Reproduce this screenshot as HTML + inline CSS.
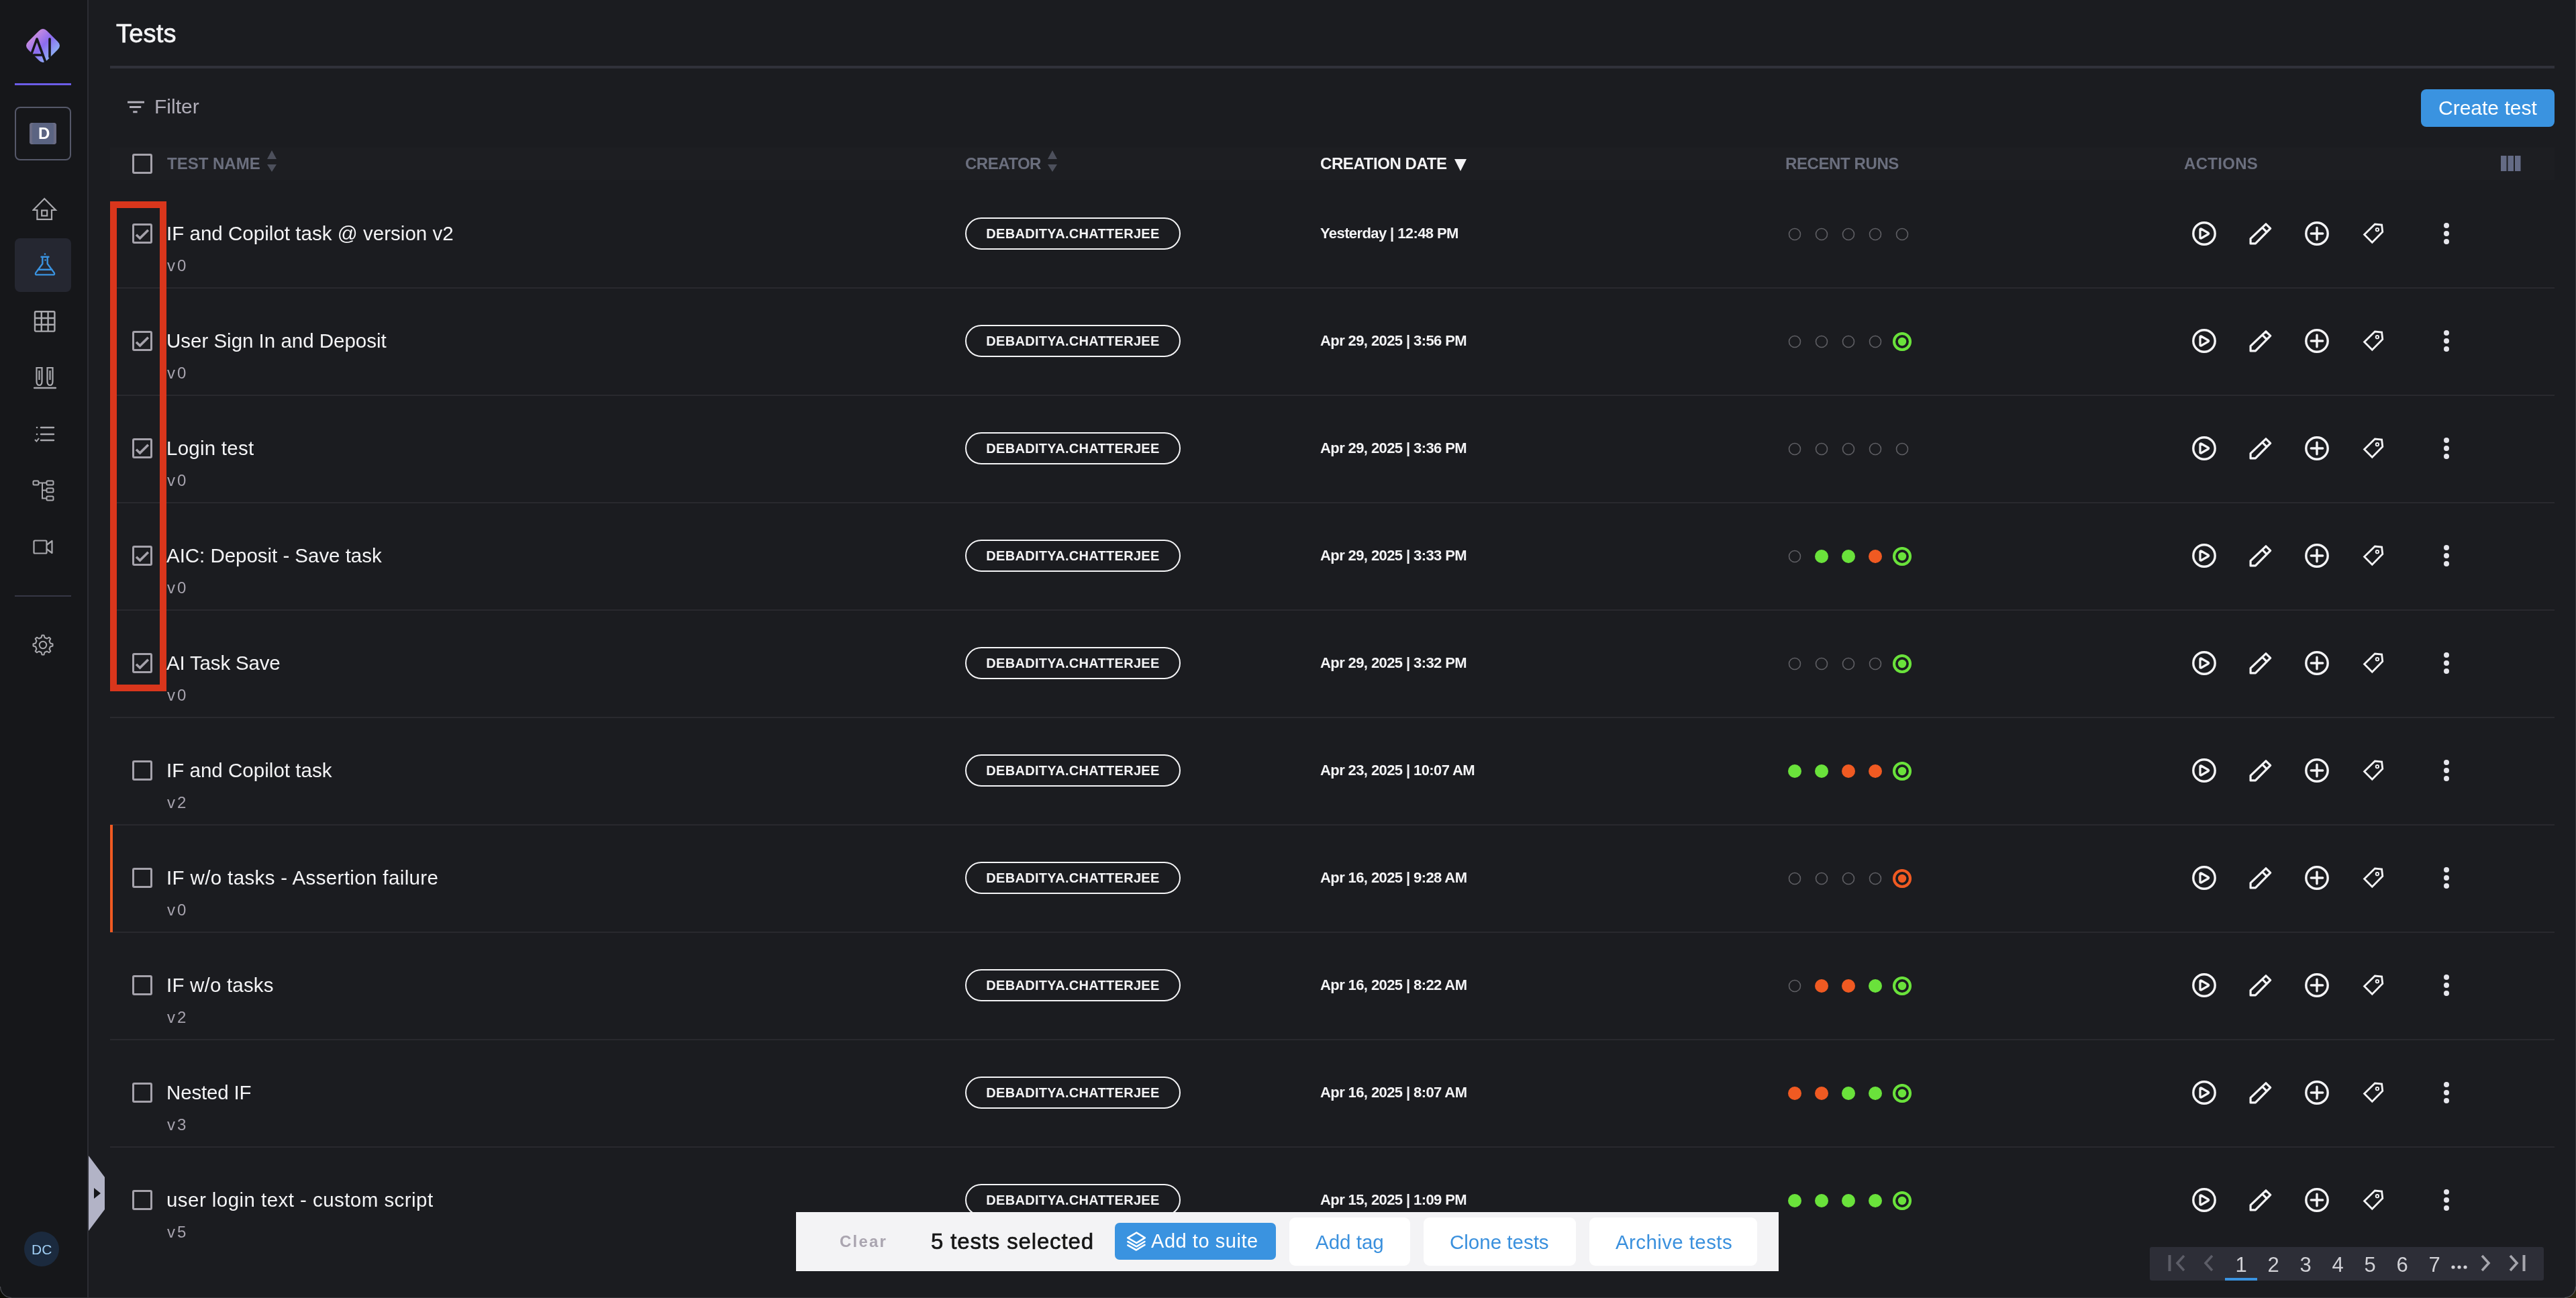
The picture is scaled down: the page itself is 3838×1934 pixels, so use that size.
<!DOCTYPE html>
<html><head><meta charset="utf-8"><style>
html,body{margin:0;padding:0;}
body{width:3838px;height:1934px;overflow:hidden;position:relative;background:#1b1c20;font-family:"Liberation Sans", sans-serif;}
.t{position:absolute;white-space:pre;line-height:1;will-change:transform;}
.badge{position:absolute;will-change:transform;width:321px;height:48px;box-sizing:border-box;border:2px solid #f4f4f6;border-radius:24px;color:#f4f4f6;font-weight:700;font-size:20px;letter-spacing:0.3px;text-align:center;line-height:44px;}
</style></head><body>
<div style="position:absolute;left:0px;top:0px;width:130px;height:1934px;background:#16171a"></div>
<div style="position:absolute;left:130px;top:0px;width:2px;height:1934px;background:#2c2d33"></div>
<svg style="position:absolute;left:36px;top:40px" width="56" height="56" viewBox="0 0 56 56">
<defs><linearGradient id="lg" x1="0" y1="0" x2="1" y2="1">
<stop offset="0.05" stop-color="#e79cd8"/><stop offset="0.5" stop-color="#8b6cf0"/><stop offset="0.95" stop-color="#90d2f7"/></linearGradient></defs>
<path d="M22 6 Q28 0 34 6 L50 22 Q56 28 50 34 L34 50 Q28 56 22 50 L6 34 Q0 28 6 22 Z" fill="url(#lg)"/>
<path d="M11 40 L19 18 L32 53 M14 42 L28 42 M38 18 L38 45" stroke="#16171a" stroke-width="3.6" fill="none" stroke-linecap="round" stroke-linejoin="round"/>
</svg>
<div style="position:absolute;left:22px;top:124px;width:84px;height:3px;background:#6b5ce7"></div>
<div style="position:absolute;left:22px;top:159px;width:84px;height:80px;border:2px solid #555869;border-radius:8px;box-sizing:border-box"></div>
<div style="position:absolute;left:44px;top:183px;width:40px;height:32px;background:#5b6482;border-radius:4px;box-shadow:inset 4px 0 0 #6a6c84, inset -4px 0 0 #6a6c84"></div>
<div class="t" style="left:57px;top:186.68px;font-size:24px;color:#fff;font-weight:700;letter-spacing:0px;">D</div>
<div style="position:absolute;left:22px;top:355px;width:84px;height:80px;background:#252731;border-radius:8px"></div>
<svg style="position:absolute;left:48px;top:293px" width="38" height="36" viewBox="0 0 38 36"><path d="M1.5 20 L18.2 3 L34.9 20 L29 20 L29 33.8 L7.4 33.8 L7.4 20 Z" stroke="#a9a9ae" stroke-width="2.2" fill="none" stroke-linejoin="miter"/><rect x="14.2" y="20.5" width="8" height="8" stroke="#a9a9ae" stroke-width="2.2" fill="none"/></svg>
<svg style="position:absolute;left:49px;top:376px" width="36" height="38" viewBox="0 0 36 38"><path d="M12.5 6.8 L23.5 6.8 M14.3 6.8 L14.3 17 L4.2 30.6 Q3 33.4 6.2 33.4 L29.8 33.4 Q33 33.4 31.8 30.6 L21.7 17 L21.7 6.8 M7.5 25.8 L28.5 25.8" stroke="#3a93e0" stroke-width="2.4" fill="none" stroke-linejoin="round" stroke-linecap="round"/><circle cx="18" cy="2.6" r="1.3" fill="#3a93e0"/><circle cx="18.5" cy="11.5" r="1.2" fill="#3a93e0"/></svg>
<svg style="position:absolute;left:50px;top:462px" width="34" height="34" viewBox="0 0 34 34"><rect x="2" y="2.2" width="29.4" height="29.4" rx="1.5" stroke="#a9a9ae" stroke-width="2.4" fill="none"/><path d="M11.8 2 V31.6 M21.6 2 V31.6 M2 12 H31.4 M2 21.8 H31.4" stroke="#a9a9ae" stroke-width="2.4"/></svg>
<svg style="position:absolute;left:50px;top:546px" width="34" height="35" viewBox="0 0 34 35"><path d="M4.5 2 V22 Q4.5 28 8.5 28 Q12.5 28 12.5 22 V2 Z M20.5 2 V22 Q20.5 28 24.5 28 Q28.5 28 28.5 22 V2 Z M8.5 6 V20 M24.5 6 V20" stroke="#a9a9ae" stroke-width="2.2" fill="none"/><path d="M1 32 H33" stroke="#a9a9ae" stroke-width="2.4" stroke-linecap="round"/></svg>
<svg style="position:absolute;left:50px;top:634px" width="32" height="26" viewBox="0 0 32 26"><path d="M11 3 H30 M11 13 H30 M11 22 H30" stroke="#a9a9ae" stroke-width="2.4" stroke-linecap="round"/><circle cx="5" cy="3" r="1.3" fill="#a9a9ae"/><circle cx="5" cy="13" r="1.3" fill="#a9a9ae"/><path d="M2 21 L4.5 23.5 L8 19" stroke="#a9a9ae" stroke-width="2" fill="none"/></svg>
<svg style="position:absolute;left:48px;top:715px" width="33" height="33" viewBox="0 0 33 33"><rect x="1.5" y="1.5" width="8" height="6" rx="1.5" stroke="#a9a9ae" stroke-width="2" fill="none"/><rect x="21.5" y="1.5" width="10" height="6" rx="1.5" stroke="#a9a9ae" stroke-width="2" fill="none"/><rect x="21.5" y="12.5" width="10" height="6" rx="1.5" stroke="#a9a9ae" stroke-width="2" fill="none"/><rect x="21.5" y="24.5" width="10" height="6" rx="1.5" stroke="#a9a9ae" stroke-width="2" fill="none"/><path d="M9.5 4.5 H21.5 M15 4.5 V27.5 H21.5 M15 15.5 H21.5" stroke="#a9a9ae" stroke-width="2" fill="none"/></svg>
<svg style="position:absolute;left:49px;top:804px" width="31" height="23" viewBox="0 0 31 23"><rect x="1.5" y="1.5" width="19" height="19" rx="1.5" stroke="#a9a9ae" stroke-width="2.2" fill="none"/><path d="M20.5 8 L28.5 2 V20 L20.5 14" stroke="#a9a9ae" stroke-width="2.2" fill="none" stroke-linejoin="round"/></svg>
<div style="position:absolute;left:22px;top:887px;width:84px;height:2px;background:#363745"></div>
<svg style="position:absolute;left:48px;top:945px" width="32" height="32" viewBox="0 0 32 32"><g transform="translate(0.5,0)"><path d="M14 1.5 L17 1.5 L18 5 L21.5 6.5 L24.7 4.7 L26.8 6.8 L25 10 L26.5 13.5 L30 14.5 V17.5 L26.5 18.5 L25 22 L26.8 25.2 L24.7 27.3 L21.5 25.5 L18 27 L17 30.5 H14 L13 27 L9.5 25.5 L6.3 27.3 L4.2 25.2 L6 22 L4.5 18.5 L1 17.5 V14.5 L4.5 13.5 L6 10 L4.2 6.8 L6.3 4.7 L9.5 6.5 L13 5 Z" stroke="#a9a9ae" stroke-width="2" fill="none" stroke-linejoin="round"/><circle cx="15.5" cy="16" r="5.2" stroke="#a9a9ae" stroke-width="2" fill="none"/></g></svg>
<div style="position:absolute;left:36px;top:1835px;width:52px;height:52px;background:#1b2a3e;border-radius:50%"></div>
<div class="t" style="left:47px;top:1851.22px;font-size:21px;color:#9fcdf2;font-weight:400;letter-spacing:0px;">DC</div>
<svg style="position:absolute;left:132px;top:1722px" width="24" height="112" viewBox="0 0 24 112"><path d="M0 0 L24 32 L24 80 L0 112 Z" fill="#b2b3c6"/><path d="M8 48 L18 56 L8 64 Z" fill="#16171a"/></svg>
<div class="t" style="left:173px;top:31.23px;font-size:38px;color:#f4f4f6;font-weight:400;letter-spacing:0.2px;-webkit-text-stroke:0.75px #f4f4f6">Tests</div>
<div style="position:absolute;left:164px;top:98px;width:3642px;height:4px;background:#30313a"></div>
<svg style="position:absolute;left:189px;top:149px" width="28" height="21" viewBox="0 0 28 21"><path d="M1 3.3 H26 M4 10.5 H21.2 M9.2 17.7 H15.6" stroke="#b0adb8" stroke-width="3"/></svg>
<div class="t" style="left:230px;top:143.60px;font-size:30px;color:#b0adb8;font-weight:400;letter-spacing:0px;">Filter</div>
<div style="position:absolute;left:3607px;top:133px;width:199px;height:56px;background:#3a93e0;border-radius:8px"></div>
<div class="t" style="left:3633px;top:145.60px;font-size:30px;color:#ffffff;font-weight:400;letter-spacing:0px;">Create test</div>
<div style="position:absolute;left:164px;top:220px;width:3642px;height:48px;background:#1d1e22"></div>
<div style="position:absolute;left:197px;top:229px;width:30px;height:30px;border:3px solid #a5a2ab;border-radius:3px;box-sizing:border-box"></div>
<div class="t" style="left:249px;top:231.68px;font-size:24px;color:#6b6f7e;font-weight:700;letter-spacing:0px;">TEST NAME</div>
<svg style="position:absolute;left:398px;top:224px" width="14" height="33" viewBox="0 0 14 33"><path d="M7 0 L14 13 L0 13 Z M0 21 L14 21 L7 32 Z" fill="#4d505c"/></svg>
<div class="t" style="left:1438px;top:231.68px;font-size:24px;color:#6b6f7e;font-weight:700;letter-spacing:-0.5px;">CREATOR</div>
<svg style="position:absolute;left:1561px;top:224px" width="14" height="33" viewBox="0 0 14 33"><path d="M7 0 L14 13 L0 13 Z M0 21 L14 21 L7 32 Z" fill="#4d505c"/></svg>
<div class="t" style="left:1967px;top:231.68px;font-size:24px;color:#f4f4f6;font-weight:700;letter-spacing:-0.4px;">CREATION DATE</div>
<svg style="position:absolute;left:2167px;top:237px" width="18" height="18" viewBox="0 0 18 18"><path d="M0 0 H18 L9 18 Z" fill="#f4f4f6"/></svg>
<div class="t" style="left:2660px;top:231.68px;font-size:24px;color:#6b6f7e;font-weight:700;letter-spacing:-0.4px;">RECENT RUNS</div>
<div class="t" style="left:3254px;top:231.68px;font-size:24px;color:#6b6f7e;font-weight:700;letter-spacing:0.3px;">ACTIONS</div>
<svg style="position:absolute;left:3726px;top:232px" width="30" height="23" viewBox="0 0 30 23"><rect x="0" y="0" width="8.5" height="23" fill="#646b85"/><rect x="10.5" y="0" width="8.5" height="23" fill="#646b85"/><rect x="21" y="0" width="8.5" height="23" fill="#646b85"/></svg>
<div style="position:absolute;left:164px;top:428px;width:3642px;height:2px;background:#29292e"></div>
<div style="position:absolute;left:197px;top:333px;width:30px;height:30px;border:3px solid #a5a2ab;border-radius:3px;box-sizing:border-box"></div>
<svg style="position:absolute;left:197px;top:333px" width="30" height="30" viewBox="0 0 30 30"><path d="M6 16.8 L11.5 22 L23.8 9.8" stroke="#a5a2ab" stroke-width="3.6" fill="none"/></svg>
<div class="t" style="left:248px;top:333.03px;font-size:29.5px;color:#f4f4f6;font-weight:400;letter-spacing:0.03px;">IF and Copilot task @ version v2</div>
<div class="t" style="left:249px;top:383.68px;font-size:24px;color:#a7a3ae;font-weight:400;letter-spacing:3px;">v0</div>
<div class="badge" style="left:1438px;top:324px">DEBADITYA.CHATTERJEE</div>
<div class="t" style="left:1967px;top:337.38px;font-size:22px;color:#f4f4f6;font-weight:700;letter-spacing:-0.6px;">Yesterday | 12:48 PM</div>
<svg style="position:absolute;left:2664px;top:339px" width="20" height="20" viewBox="0 0 20 20"><circle cx="10" cy="10" r="8.5" stroke="#5f5f64" stroke-width="1.6" fill="none"/></svg>
<svg style="position:absolute;left:2704px;top:339px" width="20" height="20" viewBox="0 0 20 20"><circle cx="10" cy="10" r="8.5" stroke="#5f5f64" stroke-width="1.6" fill="none"/></svg>
<svg style="position:absolute;left:2744px;top:339px" width="20" height="20" viewBox="0 0 20 20"><circle cx="10" cy="10" r="8.5" stroke="#5f5f64" stroke-width="1.6" fill="none"/></svg>
<svg style="position:absolute;left:2784px;top:339px" width="20" height="20" viewBox="0 0 20 20"><circle cx="10" cy="10" r="8.5" stroke="#5f5f64" stroke-width="1.6" fill="none"/></svg>
<svg style="position:absolute;left:2824px;top:339px" width="20" height="20" viewBox="0 0 20 20"><circle cx="10" cy="10" r="8.5" stroke="#5f5f64" stroke-width="1.6" fill="none"/></svg>
<svg style="position:absolute;left:3264px;top:328px" width="40" height="40" viewBox="0 0 40 40"><circle cx="20" cy="20" r="16.2" stroke="#f4f4f6" stroke-width="3.4" fill="none"/><path d="M15.5 13 Q14 12.5 14 14 V26 Q14 27.5 15.5 27 L26 21 Q27.5 20 26 19 Z" stroke="#f4f4f6" stroke-width="3.2" fill="none" stroke-linejoin="round"/></svg>
<svg style="position:absolute;left:3349px;top:329px" width="38" height="38" viewBox="0 0 38 38"><path d="M4.1 26.6 L27 4.8 L33.7 11.3 L11.4 33.9 L4.1 33.9 Z M21.2 9.6 L28.6 17.1" stroke="#f4f4f6" stroke-width="3.2" fill="none" stroke-linejoin="round"/></svg>
<svg style="position:absolute;left:3432px;top:328px" width="40" height="40" viewBox="0 0 40 40"><circle cx="20" cy="20" r="16.2" stroke="#f4f4f6" stroke-width="3.4" fill="none"/><path d="M11.3 20 H28.7 M20 11.3 V28.7" stroke="#f4f4f6" stroke-width="3.4" stroke-linecap="round"/></svg>
<svg style="position:absolute;left:3520px;top:332px" width="34" height="34" viewBox="0 0 34 34"><path d="M2.6 17.6 L18.4 2 L28.6 3 L29.8 13.6 L14.3 29.2 Z" stroke="#f4f4f6" stroke-width="2.8" fill="none" stroke-linejoin="miter"/><circle cx="21.9" cy="10.2" r="2.2" stroke="#f4f4f6" stroke-width="1.9" fill="none"/></svg>
<svg style="position:absolute;left:3640px;top:331px" width="10" height="34" viewBox="0 0 10 34"><circle cx="5" cy="5" r="4" fill="#e6e6ec"/><circle cx="5" cy="17" r="4" fill="#e6e6ec"/><circle cx="5" cy="29" r="4" fill="#e6e6ec"/></svg>
<div style="position:absolute;left:164px;top:588px;width:3642px;height:2px;background:#29292e"></div>
<div style="position:absolute;left:197px;top:493px;width:30px;height:30px;border:3px solid #a5a2ab;border-radius:3px;box-sizing:border-box"></div>
<svg style="position:absolute;left:197px;top:493px" width="30" height="30" viewBox="0 0 30 30"><path d="M6 16.8 L11.5 22 L23.8 9.8" stroke="#a5a2ab" stroke-width="3.6" fill="none"/></svg>
<div class="t" style="left:248px;top:493.03px;font-size:29.5px;color:#f4f4f6;font-weight:400;letter-spacing:-0.01px;">User Sign In and Deposit</div>
<div class="t" style="left:249px;top:543.68px;font-size:24px;color:#a7a3ae;font-weight:400;letter-spacing:3px;">v0</div>
<div class="badge" style="left:1438px;top:484px">DEBADITYA.CHATTERJEE</div>
<div class="t" style="left:1967px;top:497.38px;font-size:22px;color:#f4f4f6;font-weight:700;letter-spacing:-0.6px;">Apr 29, 2025 | 3:56 PM</div>
<svg style="position:absolute;left:2664px;top:499px" width="20" height="20" viewBox="0 0 20 20"><circle cx="10" cy="10" r="8.5" stroke="#5f5f64" stroke-width="1.6" fill="none"/></svg>
<svg style="position:absolute;left:2704px;top:499px" width="20" height="20" viewBox="0 0 20 20"><circle cx="10" cy="10" r="8.5" stroke="#5f5f64" stroke-width="1.6" fill="none"/></svg>
<svg style="position:absolute;left:2744px;top:499px" width="20" height="20" viewBox="0 0 20 20"><circle cx="10" cy="10" r="8.5" stroke="#5f5f64" stroke-width="1.6" fill="none"/></svg>
<svg style="position:absolute;left:2784px;top:499px" width="20" height="20" viewBox="0 0 20 20"><circle cx="10" cy="10" r="8.5" stroke="#5f5f64" stroke-width="1.6" fill="none"/></svg>
<svg style="position:absolute;left:2820px;top:495px" width="28" height="28" viewBox="0 0 28 28"><circle cx="14" cy="14" r="12" stroke="#6ae23b" stroke-width="4.1" fill="none"/><circle cx="14" cy="14" r="6.2" fill="#6ae23b"/></svg>
<svg style="position:absolute;left:3264px;top:488px" width="40" height="40" viewBox="0 0 40 40"><circle cx="20" cy="20" r="16.2" stroke="#f4f4f6" stroke-width="3.4" fill="none"/><path d="M15.5 13 Q14 12.5 14 14 V26 Q14 27.5 15.5 27 L26 21 Q27.5 20 26 19 Z" stroke="#f4f4f6" stroke-width="3.2" fill="none" stroke-linejoin="round"/></svg>
<svg style="position:absolute;left:3349px;top:489px" width="38" height="38" viewBox="0 0 38 38"><path d="M4.1 26.6 L27 4.8 L33.7 11.3 L11.4 33.9 L4.1 33.9 Z M21.2 9.6 L28.6 17.1" stroke="#f4f4f6" stroke-width="3.2" fill="none" stroke-linejoin="round"/></svg>
<svg style="position:absolute;left:3432px;top:488px" width="40" height="40" viewBox="0 0 40 40"><circle cx="20" cy="20" r="16.2" stroke="#f4f4f6" stroke-width="3.4" fill="none"/><path d="M11.3 20 H28.7 M20 11.3 V28.7" stroke="#f4f4f6" stroke-width="3.4" stroke-linecap="round"/></svg>
<svg style="position:absolute;left:3520px;top:492px" width="34" height="34" viewBox="0 0 34 34"><path d="M2.6 17.6 L18.4 2 L28.6 3 L29.8 13.6 L14.3 29.2 Z" stroke="#f4f4f6" stroke-width="2.8" fill="none" stroke-linejoin="miter"/><circle cx="21.9" cy="10.2" r="2.2" stroke="#f4f4f6" stroke-width="1.9" fill="none"/></svg>
<svg style="position:absolute;left:3640px;top:491px" width="10" height="34" viewBox="0 0 10 34"><circle cx="5" cy="5" r="4" fill="#e6e6ec"/><circle cx="5" cy="17" r="4" fill="#e6e6ec"/><circle cx="5" cy="29" r="4" fill="#e6e6ec"/></svg>
<div style="position:absolute;left:164px;top:748px;width:3642px;height:2px;background:#29292e"></div>
<div style="position:absolute;left:197px;top:653px;width:30px;height:30px;border:3px solid #a5a2ab;border-radius:3px;box-sizing:border-box"></div>
<svg style="position:absolute;left:197px;top:653px" width="30" height="30" viewBox="0 0 30 30"><path d="M6 16.8 L11.5 22 L23.8 9.8" stroke="#a5a2ab" stroke-width="3.6" fill="none"/></svg>
<div class="t" style="left:248px;top:653.03px;font-size:29.5px;color:#f4f4f6;font-weight:400;letter-spacing:0.24px;">Login test</div>
<div class="t" style="left:249px;top:703.68px;font-size:24px;color:#a7a3ae;font-weight:400;letter-spacing:3px;">v0</div>
<div class="badge" style="left:1438px;top:644px">DEBADITYA.CHATTERJEE</div>
<div class="t" style="left:1967px;top:657.38px;font-size:22px;color:#f4f4f6;font-weight:700;letter-spacing:-0.6px;">Apr 29, 2025 | 3:36 PM</div>
<svg style="position:absolute;left:2664px;top:659px" width="20" height="20" viewBox="0 0 20 20"><circle cx="10" cy="10" r="8.5" stroke="#5f5f64" stroke-width="1.6" fill="none"/></svg>
<svg style="position:absolute;left:2704px;top:659px" width="20" height="20" viewBox="0 0 20 20"><circle cx="10" cy="10" r="8.5" stroke="#5f5f64" stroke-width="1.6" fill="none"/></svg>
<svg style="position:absolute;left:2744px;top:659px" width="20" height="20" viewBox="0 0 20 20"><circle cx="10" cy="10" r="8.5" stroke="#5f5f64" stroke-width="1.6" fill="none"/></svg>
<svg style="position:absolute;left:2784px;top:659px" width="20" height="20" viewBox="0 0 20 20"><circle cx="10" cy="10" r="8.5" stroke="#5f5f64" stroke-width="1.6" fill="none"/></svg>
<svg style="position:absolute;left:2824px;top:659px" width="20" height="20" viewBox="0 0 20 20"><circle cx="10" cy="10" r="8.5" stroke="#5f5f64" stroke-width="1.6" fill="none"/></svg>
<svg style="position:absolute;left:3264px;top:648px" width="40" height="40" viewBox="0 0 40 40"><circle cx="20" cy="20" r="16.2" stroke="#f4f4f6" stroke-width="3.4" fill="none"/><path d="M15.5 13 Q14 12.5 14 14 V26 Q14 27.5 15.5 27 L26 21 Q27.5 20 26 19 Z" stroke="#f4f4f6" stroke-width="3.2" fill="none" stroke-linejoin="round"/></svg>
<svg style="position:absolute;left:3349px;top:649px" width="38" height="38" viewBox="0 0 38 38"><path d="M4.1 26.6 L27 4.8 L33.7 11.3 L11.4 33.9 L4.1 33.9 Z M21.2 9.6 L28.6 17.1" stroke="#f4f4f6" stroke-width="3.2" fill="none" stroke-linejoin="round"/></svg>
<svg style="position:absolute;left:3432px;top:648px" width="40" height="40" viewBox="0 0 40 40"><circle cx="20" cy="20" r="16.2" stroke="#f4f4f6" stroke-width="3.4" fill="none"/><path d="M11.3 20 H28.7 M20 11.3 V28.7" stroke="#f4f4f6" stroke-width="3.4" stroke-linecap="round"/></svg>
<svg style="position:absolute;left:3520px;top:652px" width="34" height="34" viewBox="0 0 34 34"><path d="M2.6 17.6 L18.4 2 L28.6 3 L29.8 13.6 L14.3 29.2 Z" stroke="#f4f4f6" stroke-width="2.8" fill="none" stroke-linejoin="miter"/><circle cx="21.9" cy="10.2" r="2.2" stroke="#f4f4f6" stroke-width="1.9" fill="none"/></svg>
<svg style="position:absolute;left:3640px;top:651px" width="10" height="34" viewBox="0 0 10 34"><circle cx="5" cy="5" r="4" fill="#e6e6ec"/><circle cx="5" cy="17" r="4" fill="#e6e6ec"/><circle cx="5" cy="29" r="4" fill="#e6e6ec"/></svg>
<div style="position:absolute;left:164px;top:908px;width:3642px;height:2px;background:#29292e"></div>
<div style="position:absolute;left:197px;top:813px;width:30px;height:30px;border:3px solid #a5a2ab;border-radius:3px;box-sizing:border-box"></div>
<svg style="position:absolute;left:197px;top:813px" width="30" height="30" viewBox="0 0 30 30"><path d="M6 16.8 L11.5 22 L23.8 9.8" stroke="#a5a2ab" stroke-width="3.6" fill="none"/></svg>
<div class="t" style="left:248px;top:813.03px;font-size:29.5px;color:#f4f4f6;font-weight:400;letter-spacing:-0.03px;">AIC: Deposit - Save task</div>
<div class="t" style="left:249px;top:863.68px;font-size:24px;color:#a7a3ae;font-weight:400;letter-spacing:3px;">v0</div>
<div class="badge" style="left:1438px;top:804px">DEBADITYA.CHATTERJEE</div>
<div class="t" style="left:1967px;top:817.38px;font-size:22px;color:#f4f4f6;font-weight:700;letter-spacing:-0.6px;">Apr 29, 2025 | 3:33 PM</div>
<svg style="position:absolute;left:2664px;top:819px" width="20" height="20" viewBox="0 0 20 20"><circle cx="10" cy="10" r="8.5" stroke="#5f5f64" stroke-width="1.6" fill="none"/></svg>
<svg style="position:absolute;left:2704px;top:819px" width="20" height="20" viewBox="0 0 20 20"><circle cx="10" cy="10" r="10" fill="#6ae23b"/></svg>
<svg style="position:absolute;left:2744px;top:819px" width="20" height="20" viewBox="0 0 20 20"><circle cx="10" cy="10" r="10" fill="#6ae23b"/></svg>
<svg style="position:absolute;left:2784px;top:819px" width="20" height="20" viewBox="0 0 20 20"><circle cx="10" cy="10" r="10" fill="#f05a22"/></svg>
<svg style="position:absolute;left:2820px;top:815px" width="28" height="28" viewBox="0 0 28 28"><circle cx="14" cy="14" r="12" stroke="#6ae23b" stroke-width="4.1" fill="none"/><circle cx="14" cy="14" r="6.2" fill="#6ae23b"/></svg>
<svg style="position:absolute;left:3264px;top:808px" width="40" height="40" viewBox="0 0 40 40"><circle cx="20" cy="20" r="16.2" stroke="#f4f4f6" stroke-width="3.4" fill="none"/><path d="M15.5 13 Q14 12.5 14 14 V26 Q14 27.5 15.5 27 L26 21 Q27.5 20 26 19 Z" stroke="#f4f4f6" stroke-width="3.2" fill="none" stroke-linejoin="round"/></svg>
<svg style="position:absolute;left:3349px;top:809px" width="38" height="38" viewBox="0 0 38 38"><path d="M4.1 26.6 L27 4.8 L33.7 11.3 L11.4 33.9 L4.1 33.9 Z M21.2 9.6 L28.6 17.1" stroke="#f4f4f6" stroke-width="3.2" fill="none" stroke-linejoin="round"/></svg>
<svg style="position:absolute;left:3432px;top:808px" width="40" height="40" viewBox="0 0 40 40"><circle cx="20" cy="20" r="16.2" stroke="#f4f4f6" stroke-width="3.4" fill="none"/><path d="M11.3 20 H28.7 M20 11.3 V28.7" stroke="#f4f4f6" stroke-width="3.4" stroke-linecap="round"/></svg>
<svg style="position:absolute;left:3520px;top:812px" width="34" height="34" viewBox="0 0 34 34"><path d="M2.6 17.6 L18.4 2 L28.6 3 L29.8 13.6 L14.3 29.2 Z" stroke="#f4f4f6" stroke-width="2.8" fill="none" stroke-linejoin="miter"/><circle cx="21.9" cy="10.2" r="2.2" stroke="#f4f4f6" stroke-width="1.9" fill="none"/></svg>
<svg style="position:absolute;left:3640px;top:811px" width="10" height="34" viewBox="0 0 10 34"><circle cx="5" cy="5" r="4" fill="#e6e6ec"/><circle cx="5" cy="17" r="4" fill="#e6e6ec"/><circle cx="5" cy="29" r="4" fill="#e6e6ec"/></svg>
<div style="position:absolute;left:164px;top:1068px;width:3642px;height:2px;background:#29292e"></div>
<div style="position:absolute;left:197px;top:973px;width:30px;height:30px;border:3px solid #a5a2ab;border-radius:3px;box-sizing:border-box"></div>
<svg style="position:absolute;left:197px;top:973px" width="30" height="30" viewBox="0 0 30 30"><path d="M6 16.8 L11.5 22 L23.8 9.8" stroke="#a5a2ab" stroke-width="3.6" fill="none"/></svg>
<div class="t" style="left:248px;top:973.03px;font-size:29.5px;color:#f4f4f6;font-weight:400;letter-spacing:-0.17px;">AI Task Save</div>
<div class="t" style="left:249px;top:1023.68px;font-size:24px;color:#a7a3ae;font-weight:400;letter-spacing:3px;">v0</div>
<div class="badge" style="left:1438px;top:964px">DEBADITYA.CHATTERJEE</div>
<div class="t" style="left:1967px;top:977.38px;font-size:22px;color:#f4f4f6;font-weight:700;letter-spacing:-0.6px;">Apr 29, 2025 | 3:32 PM</div>
<svg style="position:absolute;left:2664px;top:979px" width="20" height="20" viewBox="0 0 20 20"><circle cx="10" cy="10" r="8.5" stroke="#5f5f64" stroke-width="1.6" fill="none"/></svg>
<svg style="position:absolute;left:2704px;top:979px" width="20" height="20" viewBox="0 0 20 20"><circle cx="10" cy="10" r="8.5" stroke="#5f5f64" stroke-width="1.6" fill="none"/></svg>
<svg style="position:absolute;left:2744px;top:979px" width="20" height="20" viewBox="0 0 20 20"><circle cx="10" cy="10" r="8.5" stroke="#5f5f64" stroke-width="1.6" fill="none"/></svg>
<svg style="position:absolute;left:2784px;top:979px" width="20" height="20" viewBox="0 0 20 20"><circle cx="10" cy="10" r="8.5" stroke="#5f5f64" stroke-width="1.6" fill="none"/></svg>
<svg style="position:absolute;left:2820px;top:975px" width="28" height="28" viewBox="0 0 28 28"><circle cx="14" cy="14" r="12" stroke="#6ae23b" stroke-width="4.1" fill="none"/><circle cx="14" cy="14" r="6.2" fill="#6ae23b"/></svg>
<svg style="position:absolute;left:3264px;top:968px" width="40" height="40" viewBox="0 0 40 40"><circle cx="20" cy="20" r="16.2" stroke="#f4f4f6" stroke-width="3.4" fill="none"/><path d="M15.5 13 Q14 12.5 14 14 V26 Q14 27.5 15.5 27 L26 21 Q27.5 20 26 19 Z" stroke="#f4f4f6" stroke-width="3.2" fill="none" stroke-linejoin="round"/></svg>
<svg style="position:absolute;left:3349px;top:969px" width="38" height="38" viewBox="0 0 38 38"><path d="M4.1 26.6 L27 4.8 L33.7 11.3 L11.4 33.9 L4.1 33.9 Z M21.2 9.6 L28.6 17.1" stroke="#f4f4f6" stroke-width="3.2" fill="none" stroke-linejoin="round"/></svg>
<svg style="position:absolute;left:3432px;top:968px" width="40" height="40" viewBox="0 0 40 40"><circle cx="20" cy="20" r="16.2" stroke="#f4f4f6" stroke-width="3.4" fill="none"/><path d="M11.3 20 H28.7 M20 11.3 V28.7" stroke="#f4f4f6" stroke-width="3.4" stroke-linecap="round"/></svg>
<svg style="position:absolute;left:3520px;top:972px" width="34" height="34" viewBox="0 0 34 34"><path d="M2.6 17.6 L18.4 2 L28.6 3 L29.8 13.6 L14.3 29.2 Z" stroke="#f4f4f6" stroke-width="2.8" fill="none" stroke-linejoin="miter"/><circle cx="21.9" cy="10.2" r="2.2" stroke="#f4f4f6" stroke-width="1.9" fill="none"/></svg>
<svg style="position:absolute;left:3640px;top:971px" width="10" height="34" viewBox="0 0 10 34"><circle cx="5" cy="5" r="4" fill="#e6e6ec"/><circle cx="5" cy="17" r="4" fill="#e6e6ec"/><circle cx="5" cy="29" r="4" fill="#e6e6ec"/></svg>
<div style="position:absolute;left:164px;top:1228px;width:3642px;height:2px;background:#29292e"></div>
<div style="position:absolute;left:197px;top:1133px;width:30px;height:30px;border:3px solid #a5a2ab;border-radius:3px;box-sizing:border-box"></div>
<div class="t" style="left:248px;top:1133.03px;font-size:29.5px;color:#f4f4f6;font-weight:400;letter-spacing:0.03px;">IF and Copilot task</div>
<div class="t" style="left:249px;top:1183.68px;font-size:24px;color:#a7a3ae;font-weight:400;letter-spacing:3px;">v2</div>
<div class="badge" style="left:1438px;top:1124px">DEBADITYA.CHATTERJEE</div>
<div class="t" style="left:1967px;top:1137.38px;font-size:22px;color:#f4f4f6;font-weight:700;letter-spacing:-0.6px;">Apr 23, 2025 | 10:07 AM</div>
<svg style="position:absolute;left:2664px;top:1139px" width="20" height="20" viewBox="0 0 20 20"><circle cx="10" cy="10" r="10" fill="#6ae23b"/></svg>
<svg style="position:absolute;left:2704px;top:1139px" width="20" height="20" viewBox="0 0 20 20"><circle cx="10" cy="10" r="10" fill="#6ae23b"/></svg>
<svg style="position:absolute;left:2744px;top:1139px" width="20" height="20" viewBox="0 0 20 20"><circle cx="10" cy="10" r="10" fill="#f05a22"/></svg>
<svg style="position:absolute;left:2784px;top:1139px" width="20" height="20" viewBox="0 0 20 20"><circle cx="10" cy="10" r="10" fill="#f05a22"/></svg>
<svg style="position:absolute;left:2820px;top:1135px" width="28" height="28" viewBox="0 0 28 28"><circle cx="14" cy="14" r="12" stroke="#6ae23b" stroke-width="4.1" fill="none"/><circle cx="14" cy="14" r="6.2" fill="#6ae23b"/></svg>
<svg style="position:absolute;left:3264px;top:1128px" width="40" height="40" viewBox="0 0 40 40"><circle cx="20" cy="20" r="16.2" stroke="#f4f4f6" stroke-width="3.4" fill="none"/><path d="M15.5 13 Q14 12.5 14 14 V26 Q14 27.5 15.5 27 L26 21 Q27.5 20 26 19 Z" stroke="#f4f4f6" stroke-width="3.2" fill="none" stroke-linejoin="round"/></svg>
<svg style="position:absolute;left:3349px;top:1129px" width="38" height="38" viewBox="0 0 38 38"><path d="M4.1 26.6 L27 4.8 L33.7 11.3 L11.4 33.9 L4.1 33.9 Z M21.2 9.6 L28.6 17.1" stroke="#f4f4f6" stroke-width="3.2" fill="none" stroke-linejoin="round"/></svg>
<svg style="position:absolute;left:3432px;top:1128px" width="40" height="40" viewBox="0 0 40 40"><circle cx="20" cy="20" r="16.2" stroke="#f4f4f6" stroke-width="3.4" fill="none"/><path d="M11.3 20 H28.7 M20 11.3 V28.7" stroke="#f4f4f6" stroke-width="3.4" stroke-linecap="round"/></svg>
<svg style="position:absolute;left:3520px;top:1132px" width="34" height="34" viewBox="0 0 34 34"><path d="M2.6 17.6 L18.4 2 L28.6 3 L29.8 13.6 L14.3 29.2 Z" stroke="#f4f4f6" stroke-width="2.8" fill="none" stroke-linejoin="miter"/><circle cx="21.9" cy="10.2" r="2.2" stroke="#f4f4f6" stroke-width="1.9" fill="none"/></svg>
<svg style="position:absolute;left:3640px;top:1131px" width="10" height="34" viewBox="0 0 10 34"><circle cx="5" cy="5" r="4" fill="#e6e6ec"/><circle cx="5" cy="17" r="4" fill="#e6e6ec"/><circle cx="5" cy="29" r="4" fill="#e6e6ec"/></svg>
<div style="position:absolute;left:164px;top:1388px;width:3642px;height:2px;background:#29292e"></div>
<div style="position:absolute;left:164px;top:1229px;width:4px;height:160px;background:#f05a22"></div>
<div style="position:absolute;left:197px;top:1293px;width:30px;height:30px;border:3px solid #a5a2ab;border-radius:3px;box-sizing:border-box"></div>
<div class="t" style="left:248px;top:1293.03px;font-size:29.5px;color:#f4f4f6;font-weight:400;letter-spacing:0.37px;">IF w/o tasks - Assertion failure</div>
<div class="t" style="left:249px;top:1343.68px;font-size:24px;color:#a7a3ae;font-weight:400;letter-spacing:3px;">v0</div>
<div class="badge" style="left:1438px;top:1284px">DEBADITYA.CHATTERJEE</div>
<div class="t" style="left:1967px;top:1297.38px;font-size:22px;color:#f4f4f6;font-weight:700;letter-spacing:-0.6px;">Apr 16, 2025 | 9:28 AM</div>
<svg style="position:absolute;left:2664px;top:1299px" width="20" height="20" viewBox="0 0 20 20"><circle cx="10" cy="10" r="8.5" stroke="#5f5f64" stroke-width="1.6" fill="none"/></svg>
<svg style="position:absolute;left:2704px;top:1299px" width="20" height="20" viewBox="0 0 20 20"><circle cx="10" cy="10" r="8.5" stroke="#5f5f64" stroke-width="1.6" fill="none"/></svg>
<svg style="position:absolute;left:2744px;top:1299px" width="20" height="20" viewBox="0 0 20 20"><circle cx="10" cy="10" r="8.5" stroke="#5f5f64" stroke-width="1.6" fill="none"/></svg>
<svg style="position:absolute;left:2784px;top:1299px" width="20" height="20" viewBox="0 0 20 20"><circle cx="10" cy="10" r="8.5" stroke="#5f5f64" stroke-width="1.6" fill="none"/></svg>
<svg style="position:absolute;left:2820px;top:1295px" width="28" height="28" viewBox="0 0 28 28"><circle cx="14" cy="14" r="12" stroke="#f05a22" stroke-width="4.1" fill="none"/><circle cx="14" cy="14" r="6.2" fill="#f05a22"/></svg>
<svg style="position:absolute;left:3264px;top:1288px" width="40" height="40" viewBox="0 0 40 40"><circle cx="20" cy="20" r="16.2" stroke="#f4f4f6" stroke-width="3.4" fill="none"/><path d="M15.5 13 Q14 12.5 14 14 V26 Q14 27.5 15.5 27 L26 21 Q27.5 20 26 19 Z" stroke="#f4f4f6" stroke-width="3.2" fill="none" stroke-linejoin="round"/></svg>
<svg style="position:absolute;left:3349px;top:1289px" width="38" height="38" viewBox="0 0 38 38"><path d="M4.1 26.6 L27 4.8 L33.7 11.3 L11.4 33.9 L4.1 33.9 Z M21.2 9.6 L28.6 17.1" stroke="#f4f4f6" stroke-width="3.2" fill="none" stroke-linejoin="round"/></svg>
<svg style="position:absolute;left:3432px;top:1288px" width="40" height="40" viewBox="0 0 40 40"><circle cx="20" cy="20" r="16.2" stroke="#f4f4f6" stroke-width="3.4" fill="none"/><path d="M11.3 20 H28.7 M20 11.3 V28.7" stroke="#f4f4f6" stroke-width="3.4" stroke-linecap="round"/></svg>
<svg style="position:absolute;left:3520px;top:1292px" width="34" height="34" viewBox="0 0 34 34"><path d="M2.6 17.6 L18.4 2 L28.6 3 L29.8 13.6 L14.3 29.2 Z" stroke="#f4f4f6" stroke-width="2.8" fill="none" stroke-linejoin="miter"/><circle cx="21.9" cy="10.2" r="2.2" stroke="#f4f4f6" stroke-width="1.9" fill="none"/></svg>
<svg style="position:absolute;left:3640px;top:1291px" width="10" height="34" viewBox="0 0 10 34"><circle cx="5" cy="5" r="4" fill="#e6e6ec"/><circle cx="5" cy="17" r="4" fill="#e6e6ec"/><circle cx="5" cy="29" r="4" fill="#e6e6ec"/></svg>
<div style="position:absolute;left:164px;top:1548px;width:3642px;height:2px;background:#29292e"></div>
<div style="position:absolute;left:197px;top:1453px;width:30px;height:30px;border:3px solid #a5a2ab;border-radius:3px;box-sizing:border-box"></div>
<div class="t" style="left:248px;top:1453.03px;font-size:29.5px;color:#f4f4f6;font-weight:400;letter-spacing:0.2px;">IF w/o tasks</div>
<div class="t" style="left:249px;top:1503.68px;font-size:24px;color:#a7a3ae;font-weight:400;letter-spacing:3px;">v2</div>
<div class="badge" style="left:1438px;top:1444px">DEBADITYA.CHATTERJEE</div>
<div class="t" style="left:1967px;top:1457.38px;font-size:22px;color:#f4f4f6;font-weight:700;letter-spacing:-0.6px;">Apr 16, 2025 | 8:22 AM</div>
<svg style="position:absolute;left:2664px;top:1459px" width="20" height="20" viewBox="0 0 20 20"><circle cx="10" cy="10" r="8.5" stroke="#5f5f64" stroke-width="1.6" fill="none"/></svg>
<svg style="position:absolute;left:2704px;top:1459px" width="20" height="20" viewBox="0 0 20 20"><circle cx="10" cy="10" r="10" fill="#f05a22"/></svg>
<svg style="position:absolute;left:2744px;top:1459px" width="20" height="20" viewBox="0 0 20 20"><circle cx="10" cy="10" r="10" fill="#f05a22"/></svg>
<svg style="position:absolute;left:2784px;top:1459px" width="20" height="20" viewBox="0 0 20 20"><circle cx="10" cy="10" r="10" fill="#6ae23b"/></svg>
<svg style="position:absolute;left:2820px;top:1455px" width="28" height="28" viewBox="0 0 28 28"><circle cx="14" cy="14" r="12" stroke="#6ae23b" stroke-width="4.1" fill="none"/><circle cx="14" cy="14" r="6.2" fill="#6ae23b"/></svg>
<svg style="position:absolute;left:3264px;top:1448px" width="40" height="40" viewBox="0 0 40 40"><circle cx="20" cy="20" r="16.2" stroke="#f4f4f6" stroke-width="3.4" fill="none"/><path d="M15.5 13 Q14 12.5 14 14 V26 Q14 27.5 15.5 27 L26 21 Q27.5 20 26 19 Z" stroke="#f4f4f6" stroke-width="3.2" fill="none" stroke-linejoin="round"/></svg>
<svg style="position:absolute;left:3349px;top:1449px" width="38" height="38" viewBox="0 0 38 38"><path d="M4.1 26.6 L27 4.8 L33.7 11.3 L11.4 33.9 L4.1 33.9 Z M21.2 9.6 L28.6 17.1" stroke="#f4f4f6" stroke-width="3.2" fill="none" stroke-linejoin="round"/></svg>
<svg style="position:absolute;left:3432px;top:1448px" width="40" height="40" viewBox="0 0 40 40"><circle cx="20" cy="20" r="16.2" stroke="#f4f4f6" stroke-width="3.4" fill="none"/><path d="M11.3 20 H28.7 M20 11.3 V28.7" stroke="#f4f4f6" stroke-width="3.4" stroke-linecap="round"/></svg>
<svg style="position:absolute;left:3520px;top:1452px" width="34" height="34" viewBox="0 0 34 34"><path d="M2.6 17.6 L18.4 2 L28.6 3 L29.8 13.6 L14.3 29.2 Z" stroke="#f4f4f6" stroke-width="2.8" fill="none" stroke-linejoin="miter"/><circle cx="21.9" cy="10.2" r="2.2" stroke="#f4f4f6" stroke-width="1.9" fill="none"/></svg>
<svg style="position:absolute;left:3640px;top:1451px" width="10" height="34" viewBox="0 0 10 34"><circle cx="5" cy="5" r="4" fill="#e6e6ec"/><circle cx="5" cy="17" r="4" fill="#e6e6ec"/><circle cx="5" cy="29" r="4" fill="#e6e6ec"/></svg>
<div style="position:absolute;left:164px;top:1708px;width:3642px;height:2px;background:#29292e"></div>
<div style="position:absolute;left:197px;top:1613px;width:30px;height:30px;border:3px solid #a5a2ab;border-radius:3px;box-sizing:border-box"></div>
<div class="t" style="left:248px;top:1613.03px;font-size:29.5px;color:#f4f4f6;font-weight:400;letter-spacing:-0.16px;">Nested IF</div>
<div class="t" style="left:249px;top:1663.68px;font-size:24px;color:#a7a3ae;font-weight:400;letter-spacing:3px;">v3</div>
<div class="badge" style="left:1438px;top:1604px">DEBADITYA.CHATTERJEE</div>
<div class="t" style="left:1967px;top:1617.38px;font-size:22px;color:#f4f4f6;font-weight:700;letter-spacing:-0.6px;">Apr 16, 2025 | 8:07 AM</div>
<svg style="position:absolute;left:2664px;top:1619px" width="20" height="20" viewBox="0 0 20 20"><circle cx="10" cy="10" r="10" fill="#f05a22"/></svg>
<svg style="position:absolute;left:2704px;top:1619px" width="20" height="20" viewBox="0 0 20 20"><circle cx="10" cy="10" r="10" fill="#f05a22"/></svg>
<svg style="position:absolute;left:2744px;top:1619px" width="20" height="20" viewBox="0 0 20 20"><circle cx="10" cy="10" r="10" fill="#6ae23b"/></svg>
<svg style="position:absolute;left:2784px;top:1619px" width="20" height="20" viewBox="0 0 20 20"><circle cx="10" cy="10" r="10" fill="#6ae23b"/></svg>
<svg style="position:absolute;left:2820px;top:1615px" width="28" height="28" viewBox="0 0 28 28"><circle cx="14" cy="14" r="12" stroke="#6ae23b" stroke-width="4.1" fill="none"/><circle cx="14" cy="14" r="6.2" fill="#6ae23b"/></svg>
<svg style="position:absolute;left:3264px;top:1608px" width="40" height="40" viewBox="0 0 40 40"><circle cx="20" cy="20" r="16.2" stroke="#f4f4f6" stroke-width="3.4" fill="none"/><path d="M15.5 13 Q14 12.5 14 14 V26 Q14 27.5 15.5 27 L26 21 Q27.5 20 26 19 Z" stroke="#f4f4f6" stroke-width="3.2" fill="none" stroke-linejoin="round"/></svg>
<svg style="position:absolute;left:3349px;top:1609px" width="38" height="38" viewBox="0 0 38 38"><path d="M4.1 26.6 L27 4.8 L33.7 11.3 L11.4 33.9 L4.1 33.9 Z M21.2 9.6 L28.6 17.1" stroke="#f4f4f6" stroke-width="3.2" fill="none" stroke-linejoin="round"/></svg>
<svg style="position:absolute;left:3432px;top:1608px" width="40" height="40" viewBox="0 0 40 40"><circle cx="20" cy="20" r="16.2" stroke="#f4f4f6" stroke-width="3.4" fill="none"/><path d="M11.3 20 H28.7 M20 11.3 V28.7" stroke="#f4f4f6" stroke-width="3.4" stroke-linecap="round"/></svg>
<svg style="position:absolute;left:3520px;top:1612px" width="34" height="34" viewBox="0 0 34 34"><path d="M2.6 17.6 L18.4 2 L28.6 3 L29.8 13.6 L14.3 29.2 Z" stroke="#f4f4f6" stroke-width="2.8" fill="none" stroke-linejoin="miter"/><circle cx="21.9" cy="10.2" r="2.2" stroke="#f4f4f6" stroke-width="1.9" fill="none"/></svg>
<svg style="position:absolute;left:3640px;top:1611px" width="10" height="34" viewBox="0 0 10 34"><circle cx="5" cy="5" r="4" fill="#e6e6ec"/><circle cx="5" cy="17" r="4" fill="#e6e6ec"/><circle cx="5" cy="29" r="4" fill="#e6e6ec"/></svg>
<div style="position:absolute;left:197px;top:1773px;width:30px;height:30px;border:3px solid #a5a2ab;border-radius:3px;box-sizing:border-box"></div>
<div class="t" style="left:248px;top:1773.03px;font-size:29.5px;color:#f4f4f6;font-weight:400;letter-spacing:0.45px;">user login text - custom script</div>
<div class="t" style="left:249px;top:1823.68px;font-size:24px;color:#a7a3ae;font-weight:400;letter-spacing:3px;">v5</div>
<div class="badge" style="left:1438px;top:1764px">DEBADITYA.CHATTERJEE</div>
<div class="t" style="left:1967px;top:1777.38px;font-size:22px;color:#f4f4f6;font-weight:700;letter-spacing:-0.6px;">Apr 15, 2025 | 1:09 PM</div>
<svg style="position:absolute;left:2664px;top:1779px" width="20" height="20" viewBox="0 0 20 20"><circle cx="10" cy="10" r="10" fill="#6ae23b"/></svg>
<svg style="position:absolute;left:2704px;top:1779px" width="20" height="20" viewBox="0 0 20 20"><circle cx="10" cy="10" r="10" fill="#6ae23b"/></svg>
<svg style="position:absolute;left:2744px;top:1779px" width="20" height="20" viewBox="0 0 20 20"><circle cx="10" cy="10" r="10" fill="#6ae23b"/></svg>
<svg style="position:absolute;left:2784px;top:1779px" width="20" height="20" viewBox="0 0 20 20"><circle cx="10" cy="10" r="10" fill="#6ae23b"/></svg>
<svg style="position:absolute;left:2820px;top:1775px" width="28" height="28" viewBox="0 0 28 28"><circle cx="14" cy="14" r="12" stroke="#6ae23b" stroke-width="4.1" fill="none"/><circle cx="14" cy="14" r="6.2" fill="#6ae23b"/></svg>
<svg style="position:absolute;left:3264px;top:1768px" width="40" height="40" viewBox="0 0 40 40"><circle cx="20" cy="20" r="16.2" stroke="#f4f4f6" stroke-width="3.4" fill="none"/><path d="M15.5 13 Q14 12.5 14 14 V26 Q14 27.5 15.5 27 L26 21 Q27.5 20 26 19 Z" stroke="#f4f4f6" stroke-width="3.2" fill="none" stroke-linejoin="round"/></svg>
<svg style="position:absolute;left:3349px;top:1769px" width="38" height="38" viewBox="0 0 38 38"><path d="M4.1 26.6 L27 4.8 L33.7 11.3 L11.4 33.9 L4.1 33.9 Z M21.2 9.6 L28.6 17.1" stroke="#f4f4f6" stroke-width="3.2" fill="none" stroke-linejoin="round"/></svg>
<svg style="position:absolute;left:3432px;top:1768px" width="40" height="40" viewBox="0 0 40 40"><circle cx="20" cy="20" r="16.2" stroke="#f4f4f6" stroke-width="3.4" fill="none"/><path d="M11.3 20 H28.7 M20 11.3 V28.7" stroke="#f4f4f6" stroke-width="3.4" stroke-linecap="round"/></svg>
<svg style="position:absolute;left:3520px;top:1772px" width="34" height="34" viewBox="0 0 34 34"><path d="M2.6 17.6 L18.4 2 L28.6 3 L29.8 13.6 L14.3 29.2 Z" stroke="#f4f4f6" stroke-width="2.8" fill="none" stroke-linejoin="miter"/><circle cx="21.9" cy="10.2" r="2.2" stroke="#f4f4f6" stroke-width="1.9" fill="none"/></svg>
<svg style="position:absolute;left:3640px;top:1771px" width="10" height="34" viewBox="0 0 10 34"><circle cx="5" cy="5" r="4" fill="#e6e6ec"/><circle cx="5" cy="17" r="4" fill="#e6e6ec"/><circle cx="5" cy="29" r="4" fill="#e6e6ec"/></svg>
<div style="position:absolute;left:164px;top:300px;width:84px;height:730px;border:10px solid #d9361c;box-sizing:border-box"></div>
<div style="position:absolute;left:1186px;top:1806px;width:1464px;height:88px;background:#f3f3f5"></div>
<div class="t" style="left:1251px;top:1837.68px;font-size:24px;color:#aaa5b0;font-weight:700;letter-spacing:2.2px;">Clear</div>
<div class="t" style="left:1387px;top:1833.07px;font-size:33px;color:#161616;font-weight:400;letter-spacing:0.85px;-webkit-text-stroke:0.7px #161616">5 tests selected</div>
<div style="position:absolute;left:1661px;top:1822px;width:240px;height:55px;background:#3a93e0;border-radius:7px"></div>
<svg style="position:absolute;left:1677px;top:1834px" width="32" height="32" viewBox="0 0 32 32"><path d="M16.3 2.6 L28.8 10.4 L16.3 18 L3.2 10.4 Z" stroke="#fff" stroke-width="2.6" fill="none" stroke-linejoin="round"/><path d="M3.4 16 L16.3 23.3 L28.4 16 M3.4 21.4 L15.9 28.5 L28.4 20.8" stroke="#fff" stroke-width="2.6" fill="none" stroke-linejoin="round" stroke-linecap="round"/></svg>
<div class="t" style="left:1715px;top:1835.45px;font-size:29px;color:#ffffff;font-weight:400;letter-spacing:0.55px;">Add to suite</div>
<div style="position:absolute;left:1921px;top:1814px;width:180px;height:72px;background:#ffffff;border-radius:9px"></div>
<div class="t" style="left:1960px;top:1836.03px;font-size:29.5px;color:#3a90dd;font-weight:400;letter-spacing:0px;">Add tag</div>
<div style="position:absolute;left:2121px;top:1814px;width:227px;height:72px;background:#ffffff;border-radius:9px"></div>
<div class="t" style="left:2160px;top:1836.03px;font-size:29.5px;color:#3a90dd;font-weight:400;letter-spacing:0px;">Clone tests</div>
<div style="position:absolute;left:2368px;top:1814px;width:250px;height:72px;background:#ffffff;border-radius:9px"></div>
<div class="t" style="left:2407px;top:1836.03px;font-size:29.5px;color:#3a90dd;font-weight:400;letter-spacing:0.4px;">Archive tests</div>
<div style="position:absolute;left:3203px;top:1858px;width:587px;height:50px;background:#2d2e37;border-radius:3px"></div>
<svg style="position:absolute;left:3229px;top:1868px" width="30" height="28" viewBox="0 0 30 28"><path d="M3.5 2 V26" stroke="#5c5d67" stroke-width="4"/><path d="M25 3 L15 14 L25 25" stroke="#5c5d67" stroke-width="3.6" fill="none"/></svg>
<svg style="position:absolute;left:3280px;top:1868px" width="22" height="28" viewBox="0 0 22 28"><path d="M16 3 L6 14 L16 25" stroke="#5c5d67" stroke-width="3.6" fill="none"/></svg>
<div class="t" style="left:3319px;top:1868.76px;width:40px;text-align:center;font-size:31px;color:#d2d2d7">1</div>
<div class="t" style="left:3367px;top:1868.76px;width:40px;text-align:center;font-size:31px;color:#d2d2d7">2</div>
<div class="t" style="left:3415px;top:1868.76px;width:40px;text-align:center;font-size:31px;color:#d2d2d7">3</div>
<div class="t" style="left:3463px;top:1868.76px;width:40px;text-align:center;font-size:31px;color:#d2d2d7">4</div>
<div class="t" style="left:3511px;top:1868.76px;width:40px;text-align:center;font-size:31px;color:#d2d2d7">5</div>
<div class="t" style="left:3559px;top:1868.76px;width:40px;text-align:center;font-size:31px;color:#d2d2d7">6</div>
<div class="t" style="left:3607px;top:1868.76px;width:40px;text-align:center;font-size:31px;color:#d2d2d7">7</div>
<div style="position:absolute;left:3315px;top:1904px;width:48px;height:4px;background:#3a93e0"></div>
<svg style="position:absolute;left:3651px;top:1884px" width="26" height="8" viewBox="0 0 26 8"><circle cx="4" cy="4" r="2.6" fill="#d2d2d7"/><circle cx="13" cy="4" r="2.6" fill="#d2d2d7"/><circle cx="22" cy="4" r="2.6" fill="#d2d2d7"/></svg>
<svg style="position:absolute;left:3692px;top:1868px" width="22" height="28" viewBox="0 0 22 28"><path d="M6 3 L16 14 L6 25" stroke="#a6a6ad" stroke-width="3.6" fill="none"/></svg>
<svg style="position:absolute;left:3735px;top:1868px" width="30" height="28" viewBox="0 0 30 28"><path d="M5 3 L15 14 L5 25" stroke="#a6a6ad" stroke-width="3.6" fill="none"/><path d="M25.5 2 V26" stroke="#a6a6ad" stroke-width="4"/></svg>
<div style="position:absolute;left:3837px;top:0px;width:1px;height:1934px;background:#36373c"></div>
<div style="position:absolute;left:0px;top:1933px;width:3838px;height:1px;background:#333438"></div>
<svg style="position:absolute;left:3821px;top:1917px" width="17" height="17" viewBox="0 0 17 17"><path d="M17 0 A17 17 0 0 1 0 17 L17 17 Z" fill="#2a2512"/><path d="M16.5 0 A16.5 16.5 0 0 1 0 16.5" stroke="#55565a" stroke-width="1.2" fill="none"/></svg>
<svg style="position:absolute;left:0px;top:1917px" width="17" height="17" viewBox="0 0 17 17"><path d="M0 0 A17 17 0 0 0 17 17 L0 17 Z" fill="#0d0d07"/><path d="M0.5 0 A16.5 16.5 0 0 0 17 16.5" stroke="#4a4b50" stroke-width="1.2" fill="none"/></svg>
</body></html>
